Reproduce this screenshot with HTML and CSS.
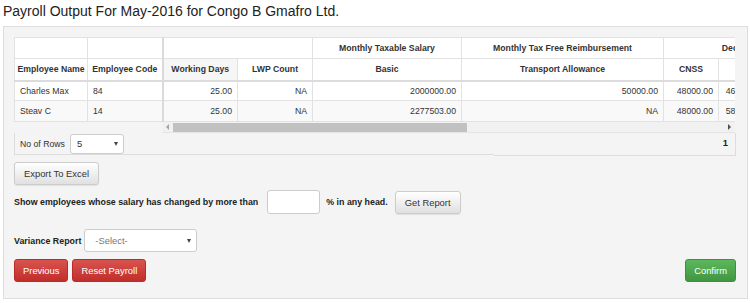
FILE: index.html
```html
<!DOCTYPE html>
<html lang="en">
<head>
    <meta charset="UTF-8">
    <meta name="viewport" content="width=device-width, initial-scale=1.0">
    <title>Payroll Output</title>
    <link rel="stylesheet" href="styles.css">
</head>
<body>
    <h1 class="page-title">Payroll Output For May-2016 for Congo B Gmafro Ltd.</h1>

    <div class="panel">
        <div class="grid-wrap">
            <table class="grid">
                <colgroup>
                    <col style="width: 73px">
                    <col style="width: 75px">
                    <col style="width: 75px">
                    <col style="width: 75px">
                    <col style="width: 149px">
                    <col style="width: 202px">
                    <col style="width: 55px">
                    <col style="width: 49px">
                    <col style="width: 60px">
                </colgroup>
                <thead>
                    <tr class="group-row">
                        <th></th>
                        <th class="fixed-edge"></th>
                        <th colspan="2"></th>
                        <th>Monthly Taxable Salary</th>
                        <th>Monthly Tax Free Reimbursement</th>
                        <th colspan="3">Deductions</th>
                    </tr>
                    <tr class="head-row">
                        <th>Employee Name</th>
                        <th class="fixed-edge">Employee Code</th>
                        <th class="sorted">Working Days</th>
                        <th>LWP Count</th>
                        <th>Basic</th>
                        <th>Transport Allowance</th>
                        <th>CNSS</th>
                        <th></th>
                        <th></th>
                    </tr>
                </thead>
                <tbody>
                    <tr>
                        <td>Charles Max</td>
                        <td class="fixed-edge">84</td>
                        <td class="num">25.00</td>
                        <td class="num">NA</td>
                        <td class="num">2000000.00</td>
                        <td class="num">50000.00</td>
                        <td class="num">48000.00</td>
                        <td class="num">46000.00</td>
                        <td class="num"></td>
                    </tr>
                    <tr>
                        <td>Steav C</td>
                        <td class="fixed-edge">14</td>
                        <td class="num">25.00</td>
                        <td class="num">NA</td>
                        <td class="num">2277503.00</td>
                        <td class="num">NA</td>
                        <td class="num">48000.00</td>
                        <td class="num">58000.00</td>
                        <td class="num"></td>
                    </tr>
                </tbody>
            </table>
        </div>

        <div class="hscroll">
            <span class="arrow arrow-left"></span>
            <div class="track"><div class="thumb"></div></div>
            <span class="arrow arrow-right"></span>
        </div>

        <div class="pager">
            <div class="pager-length">
                <label>No of Rows</label>
                <div class="select select-small"><span>5</span><span class="caret"></span></div>
            </div>
            <div class="pager-pages"><b>1</b></div>
        </div>

        <button class="btn btn-default export-btn">Export To Excel</button>

        <div class="form-line">
            <label class="bold-label">Show employees whose salary has changed by more than</label>
            <input class="pct-input" type="text">
            <label class="bold-label">% in any head.</label>
            <button class="btn btn-default report-btn">Get Report</button>
        </div>

        <div class="form-line variance-line">
            <label class="bold-label">Variance Report</label>
            <div class="select select-wide"><span class="placeholder">-Select-</span><span class="caret"></span></div>
        </div>

        <div class="actions">
            <div class="actions-left">
                <button class="btn btn-danger">Previous</button>
                <button class="btn btn-danger">Reset Payroll</button>
            </div>
            <button class="btn btn-success">Confirm</button>
        </div>
    </div>
</body>
</html>
```

FILE: styles.css
```css
* {
    margin: 0;
    padding: 0;
    box-sizing: border-box;
}

body {
    font-family: 'Liberation Sans', Arial, sans-serif;
    background: #fff;
    color: #333;
    width: 750px;
    height: 303px;
    overflow: hidden;
}

.page-title {
    font-size: 14px;
    font-weight: normal;
    line-height: 17px;
    height: 26px;
    padding: 3px 0 0 3px;
    color: #222;
}

.panel {
    margin: 0 2px 0 3px;
    background: #f4f4f4;
    border: 1px solid #ddd;
    padding: 10px 11px 16px 10px;
}

/* grid */
.grid-wrap {
    width: 721px;
    overflow: hidden;
    background: #fff;
}

.grid {
    table-layout: fixed;
    width: 793px;
    border-collapse: collapse;
    font-size: 8.7px;
}

.grid th,
.grid td {
    border: 1px solid #e2e2e2;
    white-space: nowrap;
    overflow: hidden;
}

.grid th {
    font-weight: bold;
    text-align: center;
    background: #fff;
    padding: 0 2px;
}

.group-row th {
    height: 21px;
}

.head-row th {
    height: 22px;
    border-bottom: 2px solid #dcdcdc;
}

.head-row th.sorted {
    background: #f6f6f6;
}

.grid td {
    padding: 0 5px;
    height: 20px;
}

.grid tbody tr:nth-child(2) td {
    background: #f9f9f9;
    height: 21px;
}

.grid td.num {
    text-align: right;
}

.grid .fixed-edge {
    border-right: 2px solid #dadada;
}

/* fake horizontal scrollbar */
.hscroll {
    display: flex;
    align-items: center;
    margin-left: 148px;
    width: 573px;
    height: 11px;
    background: #f1f1f1;
    border-bottom: 1px solid #e4e4e4;
}

.track {
    flex: 1;
    height: 9px;
    position: relative;
}

.thumb {
    position: absolute;
    left: 0;
    top: 0;
    width: 294px;
    height: 9px;
    background: #c1c1c1;
}

.arrow {
    width: 11px;
    height: 9px;
    display: flex;
    align-items: center;
    justify-content: center;
}

.arrow::before {
    content: "";
    border-top: 3px solid transparent;
    border-bottom: 3px solid transparent;
}

.arrow-left::before {
    border-right: 3px solid #a3a3a3;
}

.arrow-right::before {
    border-left: 3px solid #505050;
}

/* pager */
.pager {
    display: flex;
    width: 722px;
    height: 23px;
    font-size: 8.7px;
}

.pager-length {
    display: flex;
    align-items: center;
    gap: 5px;
    width: 480px;
    height: 22px;
    padding-left: 5px;
    border-left: 1px solid #ddd;
    border-bottom: 1px solid #ddd;
}

.pager-pages {
    flex: 1;
    display: flex;
    justify-content: flex-end;
    align-items: center;
    height: 23px;
    padding: 0 7px 4px 0;
    border-right: 1px solid #ddd;
    border-bottom: 1px solid #ddd;
    font-size: 9.4px;
    color: #222;
}

.select {
    display: flex;
    align-items: center;
    justify-content: space-between;
    background: #fff;
    border: 1px solid #ccc;
    border-radius: 3px;
    color: #333;
    font-size: 9.4px;
}

.select-small {
    width: 54px;
    height: 20px;
    padding: 0 5px 0 6px;
}

.select-wide {
    width: 113px;
    height: 23px;
    padding: 0 5px 0 10px;
}

.select .placeholder {
    color: #777;
}

.caret {
    border-left: 2.5px solid transparent;
    border-right: 2.5px solid transparent;
    border-top: 4px solid #444;
}

/* buttons */
.btn {
    font-family: inherit;
    font-size: 9.4px;
    height: 23px;
    padding: 0 8px;
    border: 1px solid #ccc;
    border-radius: 3px;
    cursor: pointer;
}

.btn-default {
    color: #333;
    background: linear-gradient(#fff 0%, #e0e0e0 100%);
    box-shadow: 0 1px 1px rgba(0, 0, 0, 0.08);
    padding: 0 9px;
}

.btn-danger {
    color: #fff;
    background: linear-gradient(#d9534f 0%, #c12e2a 100%);
    border-color: #b92c28;
}

.btn-success {
    color: #fff;
    background: linear-gradient(#5cb85c 0%, #419641 100%);
    border-color: #3e8f3e;
}

.export-btn {
    display: block;
    margin-top: 6px;
}

.form-line {
    display: flex;
    align-items: center;
    margin-top: 5px;
    font-size: 8.85px;
}

.bold-label {
    font-weight: bold;
    color: #222;
}

.pct-input {
    width: 53px;
    height: 24px;
    margin: 0 6px 0 9px;
    border: 1px solid #ccc;
    border-radius: 3px;
    background: #fff;
}

.report-btn {
    margin-left: 7px;
}

.variance-line {
    margin-top: 15px;
    gap: 3px;
}

.actions {
    display: flex;
    justify-content: space-between;
    margin-top: 7px;
}

.actions-left {
    display: flex;
    gap: 4px;
}
```
